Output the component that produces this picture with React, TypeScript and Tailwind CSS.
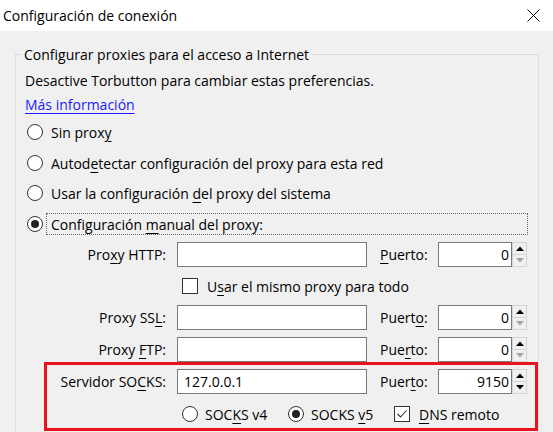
import React from 'react';

// Access key underline
const K = ({ children }: { children: React.ReactNode }) => (
  <span className="underline decoration-1 underline-offset-[3px]">{children}</span>
);

const Radio = ({ checked = false }: { checked?: boolean }) => (
  <span className="flex h-4 w-4 shrink-0 items-center justify-center rounded-full border border-[#333] bg-white">
    {checked && <span className="h-2 w-2 rounded-full bg-[#222]" />}
  </span>
);

const Checkbox = ({ checked = false }: { checked?: boolean }) => (
  <span className="flex h-4 w-4 shrink-0 items-center justify-center border border-[#333] bg-white">
    {checked && (
      <svg width="14" height="14" viewBox="0 0 14 14">
        <polyline points="2.5,7 5.5,10 11.5,3.5" fill="none" stroke="#333" strokeWidth="1.1" />
      </svg>
    )}
  </span>
);

const Spinner = ({ downEnabled }: { downEnabled: boolean }) => (
  <div className="flex h-[25px] w-[15px] flex-col">
    <div className="flex h-[13px] items-center justify-center border border-[#d4d4d4] bg-[#f0f0f0]">
      <svg width="8" height="5" viewBox="0 0 8 5">
        <polygon points="0,5 4,0.5 8,5" fill="#000" />
      </svg>
    </div>
    <div className="flex h-[12px] items-center justify-center border border-t-0 border-[#d4d4d4] bg-[#f0f0f0]">
      <svg width="8" height="5" viewBox="0 0 8 5">
        <polygon points="0,0 8,0 4,4.5" fill={downEnabled ? '#000' : '#a3a3a3'} />
      </svg>
    </div>
  </div>
);

type RowProps = {
  label: React.ReactNode;
  value?: string;
  port: React.ReactNode;
  portValue: string;
  labelWidth: string;
  downEnabled?: boolean;
};

const ProxyRow = ({ label, value = '', port, portValue, labelWidth, downEnabled = false }: RowProps) => (
  <div className="flex h-[25px] items-center">
    <div className={`${labelWidth} shrink-0 text-right leading-[20px]`}>{label}</div>
    <div className="ml-[11px] flex h-[25px] w-[190px] items-center border border-[#7a7a7a] bg-white pl-[6px]">
      {value}
    </div>
    <div className="ml-[13px] w-[58px] shrink-0 leading-[20px]">{port}</div>
    <div className="flex h-[25px] w-[74px] items-center justify-end border border-[#7a7a7a] bg-white pr-[2px]">
      {portValue}
    </div>
    <Spinner downEnabled={downEnabled} />
  </div>
);

export default function App() {
  return (
    <div className="h-[432px] w-[553px] overflow-hidden bg-[#f0f0f0] font-['Open_Sans',sans-serif] text-[14px] text-black">
      {/* Title bar */}
      <div className="flex h-[31px] items-center justify-between bg-white pl-[3px] pr-[13px]">
        <span className="leading-[20px]">Configuración de conexión</span>
        <svg width="13" height="13" viewBox="0 0 13 13">
          <path d="M0.5 0.5 L12.5 12.5 M12.5 0.5 L0.5 12.5" stroke="#000" strokeWidth="1" />
        </svg>
      </div>

      {/* Group box */}
      <div className="ml-[15px] mt-[23px] w-[524px] border border-[#dcdcdc] pb-10">
        <div className="-mt-[10px] ml-[6px] w-fit bg-[#f0f0f0] px-[2px] leading-[20px]">
          Configurar proxies para el acceso a Internet
        </div>

        <div className="pl-[9px]">
          <div className="mt-[4px] leading-[24px]">Desactive Torbutton para cambiar estas preferencias.</div>
          <div className="leading-[24px]">
            <span className="text-[#1a1aff] underline decoration-1 underline-offset-[3px]">Más información</span>
          </div>
        </div>

        {/* Radio options */}
        <div className="pl-[11px]">
          <div className="mt-[3px] flex h-[24px] items-center">
            <Radio />
            <span className="ml-[8px]">
              Sin prox<K>y</K>
            </span>
          </div>
          <div className="mt-[7px] flex h-[24px] items-center">
            <Radio />
            <span className="ml-[8px]">
              Autod<K>e</K>tectar configuración del proxy para esta red
            </span>
          </div>
          <div className="mt-[6px] flex h-[24px] items-center">
            <Radio />
            <span className="ml-[8px]">
              Usar la configuración <K>d</K>el proxy del sistema
            </span>
          </div>
          <div className="mt-[7px] flex h-[24px] items-center">
            <Radio checked />
            <div className="ml-[3px] flex h-[22px] w-[482px] items-center border border-dotted border-[#666] pl-[4px]">
              <span>
                Configuración <K>m</K>anual del proxy:
              </span>
            </div>
          </div>
        </div>

        {/* Manual proxy fields */}
        <div className="mt-[6px]">
          <ProxyRow
            labelWidth="w-[150px]"
            label={
              <>
                Pro<K>x</K>y HTTP:
              </>
            }
            port={
              <>
                <K>P</K>uerto:
              </>
            }
            portValue="0"
          />
          <div className="mt-[7px] flex h-[24px] items-center pl-[166px]">
            <Checkbox />
            <span className="ml-[9px]">
              U<K>s</K>ar el mismo proxy para todo
            </span>
          </div>
          <div className="mt-[7px]">
            <ProxyRow
              labelWidth="w-[150px]"
              label={
                <>
                  Proxy SS<K>L</K>:
                </>
              }
              port={
                <>
                  Puert<K>o</K>:
                </>
              }
              portValue="0"
            />
          </div>
          <div className="mt-[7px]">
            <ProxyRow
              labelWidth="w-[150px]"
              label={
                <>
                  Proxy <K>F</K>TP:
                </>
              }
              port={
                <>
                  Pue<K>r</K>to:
                </>
              }
              portValue="0"
            />
          </div>

          {/* SOCKS, highlighted */}
          <div className="ml-[28px] w-[494px] border-[3px] border-[#e8131f] pb-[2px] pt-[4px]">
            <ProxyRow
              labelWidth="w-[119px]"
              label={
                <>
                  Servidor SO<K>C</K>KS:
                </>
              }
              value="127.0.0.1"
              port={
                <>
                  Puer<K>t</K>o:
                </>
              }
              portValue="9150"
              downEnabled
            />
            <div className="mt-[8px] flex h-[24px] items-center pl-[135px]">
              <div className="flex w-[106px] items-center">
                <Radio />
                <span className="ml-[7px]">
                  SOC<K>K</K>S v4
                </span>
              </div>
              <div className="flex w-[106px] items-center">
                <Radio checked />
                <span className="ml-[7px]">
                  SOCKS <K>v</K>5
                </span>
              </div>
              <div className="flex items-center">
                <Checkbox checked />
                <span className="ml-[9px]">
                  <K>D</K>NS remoto
                </span>
              </div>
            </div>
          </div>
        </div>
      </div>
    </div>
  );
}
